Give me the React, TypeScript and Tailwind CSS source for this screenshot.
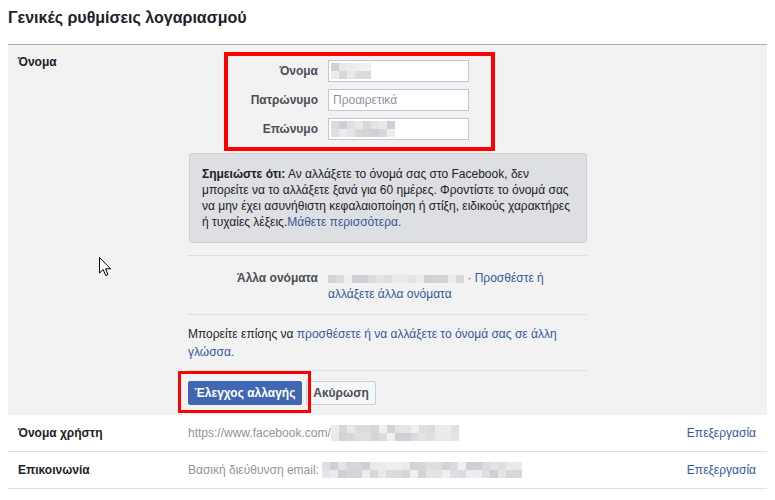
import React from 'react';

const palette = ['#ececee', '#e4e4e6', '#dcdce0', '#d4d3d8', '#e9e9e9', '#cfd0d6', '#dedfe3', '#f0f0f0', '#d8d6d6'];

// pixelated blur used to hide personal data
const Blur = ({ width, height, seed }: { width: number; height: number; seed: number }) => {
    const cols = Math.ceil(width / 8);
    const rows = Math.ceil(height / 8);
    const cells = [];
    for (let r = 0; r < rows; r++) {
        for (let c = 0; c < cols; c++) {
            const n = (c * 7 + r * 13 + seed * 31 + ((c * c + seed) % 5)) % palette.length;
            cells.push(<span key={r + '-' + c} className="block w-[8px] h-[8px]" style={{ backgroundColor: palette[n] }} />);
        }
    }
    return (
        <span className="inline-flex flex-wrap align-middle overflow-hidden" style={{ width: cols * 8, height: rows * 8 }}>
            {cells}
        </span>
    );
};

const NameInput = ({ label, children }: { label: string; children?: React.ReactNode }) => {
    return (
        <div className="flex items-center h-[22px]">
            <div className="w-[90px] text-right font-bold text-[#4b4f56] text-[12px]">{label}</div>
            <div className="ml-[10px] w-[141px] h-[22px] border border-[#bdc7d8] bg-white flex items-center pl-[2px]">
                {children}
            </div>
        </div>
    );
};

const InfoRow = ({ label, children }: { label: string; children: React.ReactNode }) => {
    return (
        <div className="flex items-center h-[37px] border-b border-[#dddfe2] bg-white">
            <div className="w-[180px] pl-[10px] font-bold text-[#1d2129]">{label}</div>
            <div className="flex-1 flex items-center text-[#90949c]">{children}</div>
            <a href="#" className="pr-[11px] text-[#365899]">Επεξεργασία</a>
        </div>
    );
};

const Cursor = () => (
    <svg className="absolute left-[99px] top-[257px]" width="13" height="20" viewBox="0 0 13 20">
        <path d="M0.5 0.5 L0.5 16 L4.2 12.6 L6.8 18.6 L9 17.6 L6.5 11.8 L11.5 11.8 Z" fill="#fff" stroke="#000" strokeWidth="1" />
    </svg>
);

const App = () => {
    return (
        <div className="relative w-[775px] h-[500px] bg-white font-['Liberation_Sans',Arial,sans-serif] text-[12px] leading-[16px] text-[#1d2129]">
            <h1 className="h-[44px] px-2 pt-[8px] text-[16px] leading-[20px] font-bold text-[#1d2129]">
                Γενικές ρυθμίσεις λογαριασμού
            </h1>
            <div className="mx-2 border-t border-[#acacac]">
                <div className="flex bg-[#f2f2f2] pb-[10px]">
                    <div className="w-[180px] pl-[10px] pt-[9px] font-bold">Όνομα</div>
                    <div className="w-[399px]">
                        <div className="ml-[36px] mt-[7px] w-[271px] border-4 border-[#ff0000] pt-[4px] pb-[7px] flex flex-col gap-[7px]">
                            <NameInput label="Όνομα">
                                <Blur width={38} height={16} seed={1} />
                            </NameInput>
                            <NameInput label="Πατρώνυμο">
                                <span className="text-[#90949c] pl-[2px]">Προαιρετικά</span>
                            </NameInput>
                            <NameInput label="Επώνυμο">
                                <Blur width={62} height={16} seed={4} />
                            </NameInput>
                        </div>
                        <div className="mt-[2px] ml-[1px] w-[398px] rounded-[3px] border border-[#ccd0d5] bg-[#dddfe2] px-[12px] py-[12px] whitespace-nowrap">
                            <b>Σημειώστε ότι:</b> Αν αλλάξετε το όνομά σας στο Facebook, δεν<br />
                            μπορείτε να το αλλάξετε ξανά για 60 ημέρες. Φροντίστε το όνομά σας<br />
                            να μην έχει ασυνήθιστη κεφαλαιοποίηση ή στίξη, ειδικούς χαρακτήρες<br />
                            ή τυχαίες λέξεις.<a href="#" className="text-[#365899]">Μάθετε περισσότερα.</a>
                        </div>
                        <div className="mt-[12px] border-t border-[#dddfe2] flex pt-[14px] pb-[12px]">
                            <div className="w-[130px] text-right font-bold text-[#4b4f56]">Άλλα ονόματα</div>
                            <div className="ml-[10px] whitespace-nowrap">
                                <Blur width={136} height={8} seed={7} />
                                <span className="text-[#365899]"> · Προσθέστε ή</span>
                                <br />
                                <a href="#" className="text-[#365899]">αλλάξετε άλλα ονόματα</a>
                            </div>
                        </div>
                        <div className="border-t border-[#dddfe2] pt-[10px] pb-[9px] leading-[18px] whitespace-nowrap">
                            Μπορείτε επίσης να <a href="#" className="text-[#365899]">προσθέσετε ή να αλλάξετε το όνομά σας σε άλλη</a>
                            <br />
                            <a href="#" className="text-[#365899]">γλώσσα.</a>
                        </div>
                        <div className="border-t border-[#dddfe2] pt-[10px] flex gap-[4px]">
                            <div className="relative">
                                <button className="w-[114px] h-[24px] rounded-[2px] border border-[#4267b2] bg-[#4267b2] text-white font-bold text-[12px]">
                                    Έλεγχος αλλαγής
                                </button>
                                <div className="absolute left-[-10px] top-[-10px] w-[133px] h-[42px] border-[3px] border-[#ff0000]" />
                            </div>
                            <button className="w-[70px] h-[24px] rounded-[2px] border border-[#ccd0d5] bg-[#f5f6f7] text-[#4b4f56] font-bold text-[12px]">
                                Ακύρωση
                            </button>
                        </div>
                    </div>
                </div>
                <InfoRow label="Όνομα χρήστη">
                    <span>https://www.facebook.com/</span>
                    <Blur width={126} height={16} seed={11} />
                </InfoRow>
                <InfoRow label="Επικοινωνία">
                    <span>Βασική διεύθυνση email:</span>
                    <span className="ml-[3px]"><Blur width={200} height={16} seed={3} /></span>
                </InfoRow>
            </div>
            <Cursor />
        </div>
    );
};

export default App;
